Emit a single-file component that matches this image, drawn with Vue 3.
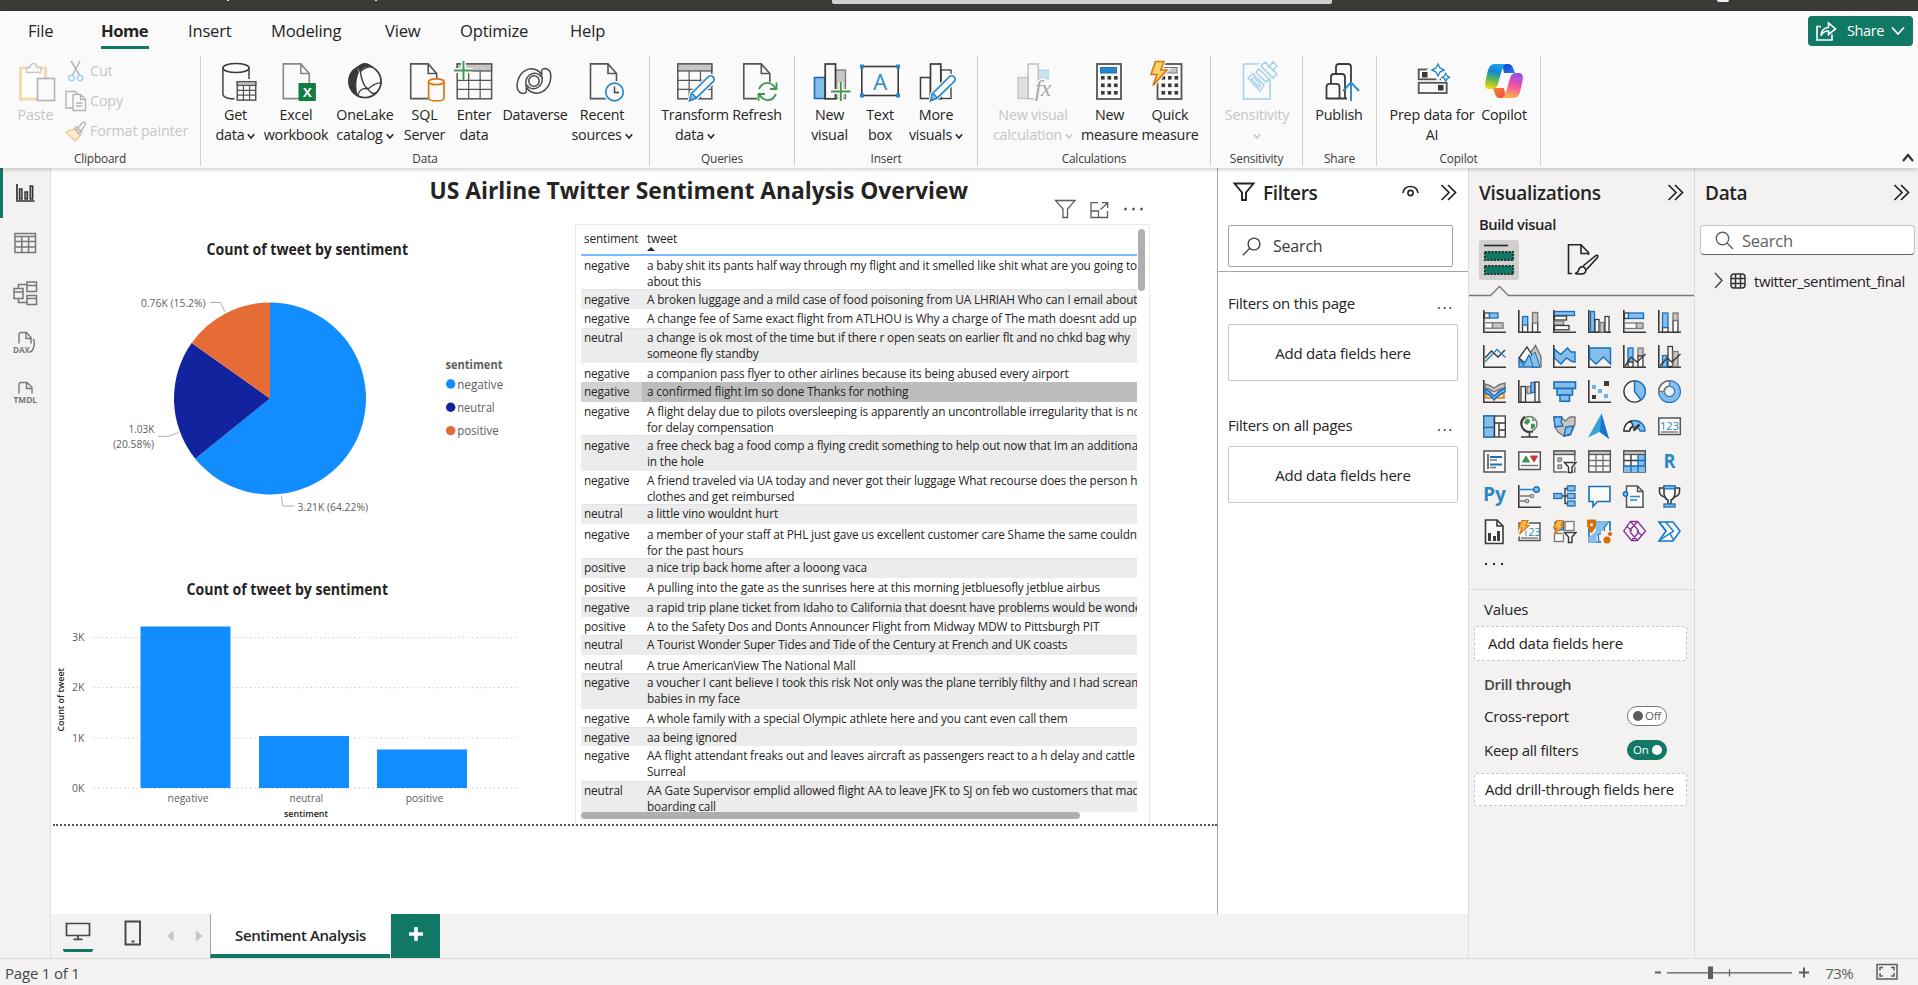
<script setup>
const D = '#3b3a39', G = '#797775', GF = '#c8c6c4', B = '#83beec', BS = '#1b6fb8', W = '#fafafa', GR = '#3d9a50', OR = '#e07b1a'

const r = (x, y, w, h, f = 'none', s = D, k = 1.3) =>
  `<rect x="${x}" y="${y}" width="${w}" height="${h}" fill="${f}" stroke="${s}" stroke-width="${k}"/>`
const p = (d, s = D, f = 'none', k = 1.4) => `<path d="${d}" fill="${f}" stroke="${s}" stroke-width="${k}"/>`
const c = (x, y, q, f = 'none', s = D, k = 1.4) =>
  `<circle cx="${x}" cy="${y}" r="${q}" fill="${f}" stroke="${s}" stroke-width="${k}"/>`

/* ribbon artwork, 40 x 44 */
const page = (x, s = '#555', f = W) => p(`M${x} 3.9H${x + 17.5}L${x + 26} 13.5V38.6H${x}ZM${x + 17.5} 3.9V13.5H${x + 26}`, s, f, 1.6)
const grid = (x, y, w, h, s = '#555', hd = GF) =>
  r(x, y, w, h, W, s, 1.5) + r(x, y, w, h * 0.2, hd, s, 1.3) +
  p(`M${x + w / 3} ${y + h * 0.2}V${y + h}M${x + w * 2 / 3} ${y + h * 0.2}V${y + h}M${x} ${y + h * 0.47}H${x + w}M${x} ${y + h * 0.73}H${x + w}`, s, 'none', 1.2)
const pencil = p('M14.6 40.6L16.4 33.6L33.4 16.6Q35.6 14.8 38 16.6Q40.2 19 38.4 21.4L21 38.2Z', W, W, 4) +
  p('M14.6 40.6L16.4 33.6L33.4 16.6Q35.6 14.8 38 16.6Q40.2 19 38.4 21.4L21 38.2Z', '#2b88c8', W, 1.6) +
  p('M14.6 40.6L16.4 33.6Q19.6 34.4 21 38.2Z', '#2b88c8', B, 1.4)
const calc = (x, top) => r(x, 4, 24, 35, W, '#555', 1.8) + top +
  [14.5, 22, 29.5].map(y => [4, 10.5, 17].map(q => `<rect x="${x + q}" y="${y + 1.5}" width="3.6" height="3.6" fill="${D}"/>`).join('')).join('')

const art = {
  paste: r(1.5, 8, 25, 31, '#fff', '#f7d9ae', 3) + p('M7.5 12.5V7.5H11Q11.5 3.5 14.5 3.5Q17.5 3.5 18 7.5H22V12.5Z', '#c8c8c8', W) + r(18.5, 18.5, 17, 22, W, '#b4b4b4', 1.7),
  get: p('M6.9 8V34.5Q8 38.8 20 39Q33 38.8 33 34.5V8', D, W) + `<ellipse cx="20" cy="8" rx="13.1" ry="4.6" fill="${W}" stroke="${D}" stroke-width="1.5"/>` + r(19.5, 20, 21, 22, W, W, 2) + grid(21.3, 21.7, 18.4, 18.4),
  excel: page(7.3, '#888') + `<rect x="22.5" y="23" width="17.4" height="18" rx="1" fill="#107c41"/><text x="31.2" y="36.8" font-size="13" font-weight="700" fill="#fff" text-anchor="middle">X</text>`,
  onelake: `<circle cx="20" cy="21.5" r="16" fill="${W}" stroke="${D}" stroke-width="1.7"/><path d="M12 7Q20-1 28 7Q20 5 15 12Z M12 7Q2 12 3.5 24Q5 33 13 36Q9 24 14 12Z" fill="${D}"/>` +
    p('M15 9Q17 26 23 29Q31 22 37 23M13 35Q15 27 23 29Q27 36 32 32M28 7Q21 6 15 12'),
  sql: page(5.7) + p('M23.6 22V38Q24 41 31.3 41Q38.8 41 39 38V22', '#d9760f', W, 1.7) + `<ellipse cx="31.3" cy="21.8" rx="7.7" ry="2.9" fill="${W}" stroke="#d9760f" stroke-width="1.7"/>`,
  enter: grid(3.2, 4, 34.4, 34.8) + p('M0 10.5H19M9.5 1V20', W, 'none', 5) + p('M0 10.5H19M9.5 1V20', GR, 'none', 1.9),
  dataverse: c(19, 21, 5.2, 'none', '#4a4a4a', 1.5) +
    p('M27 14.500C25.500 10.500 27 8.500 30 8.500C36 9 37 16 35 22C32 31 24 35.500 16.500 32C9.500 28.500 9 19.500 14.500 15C19 12 24 13 26 17', '#4a4a4a', 'none', 1.5) +
    p('M11 27.500C12.500 31.500 11 33.500 8 33.500C2 33 1 26 3 20C6 11 14 6.500 21.500 10C28.500 13.500 29 22.500 23.500 27C19 30 14 29 12 25', '#4a4a4a', 'none', 1.5),
  recent: page(8.5) + c(32.5, 32, 10.4, W, W) + c(32.5, 32, 8.8, W, '#2b88c8', 1.7) + p('M32.500 26.500V32.500H37', D),
  transform: grid(2.8, 4, 34, 34.800) + pencil,
  refresh: page(6.800) + `<rect x="20" y="22" width="21" height="20" fill="${W}"/>` + p('M22 29Q25 22.500 31 22.800Q36 23.500 38.500 28.500M39.500 22.500V29H33M39 34Q36 40.500 30 40.200Q25 39.500 22.500 34.500M21.500 41V34H28', GR, 'none', 1.8),
  newvis: r(25.500, 10, 10, 28.500, GF, G) + r(4.500, 17.500, 10.500, 21, B, BS, 1.600) + r(15.200, 4, 10.300, 34.800, W, D, 1.700) + p('M21 31.500H40.500M30.800 22V41', W, 'none', 5) + p('M21 31.500H40.500M30.800 22V41', GR, 'none', 1.900),
  text: r(1.800, 6.500, 36.400, 29, W, D, 1.600) + [[0, 4.500], [36, 4.500], [0, 33.500], [36, 33.500]].map(q => `<rect x="${q[0]}" y="${q[1]}" width="4" height="4" fill="#2b88c8"/>`).join('') + `<text x="20" y="29.500" font-size="22" fill="#2b88c8" text-anchor="middle">A</text>`,
  more: r(25, 10, 10, 28.500, W) + r(4.500, 17.500, 10, 21, W, D, 1.500) + r(14.500, 4, 10.300, 34.800, W, D, 1.700) + pencil,
  calcvis: r(25.500, 10, 10, 9, '#c7e0f4', '#bcd9ee') + r(5, 17.500, 10, 21, '#e1dfdd', '#c4c4c4') + r(15.200, 4, 10, 34.800, W, '#c4c4c4', 1.600) + `<text x="30" y="36" font-size="23" font-style="italic" font-family="Liberation Serif" fill="#a6a6a6" stroke="${W}" stroke-width="3" paint-order="stroke" text-anchor="middle">fx</text>`,
  calc: calc(7, r(10.500, 7.500, 16, 5.500, '#2b88c8', BS, 1)),
  quick: calc(7.500, r(12, 7.500, 15, 5.500, GF, G, 1)) + p('M5.500 1.500H14L10.800 10H17L3 25.500L7 14.500H1Z', W, W, 4) + p('M5.500 1.500H14L10.800 10H17L3 25.500L7 14.500H1Z', '#d9760f', '#fcd06b', 1.600),
  sens: r(6.500, 4, 26.500, 35, W, '#a9d3ea', 1.600) + p('M20 8L29 18L38 12L31 2Z', W, W, 5) + p('M24 6L28 2L40 14L36 18ZM31 8L36 2L40 6L35 11M22 9L32 19L29 22L19 12Z', '#a9d3ea', W, 1.600) + p('M11 18L16 13.500L27 25L23 31Z M14.500 19L17 17L23.500 24.500L22 27Z', '#a9d3ea', 'none', 1.500),
  publish: p('M17 14V7Q17 4 20 4H29Q32 4 32 7V22M12 23V17Q12 14 15 14H23Q26 14 26 17V38', D, 'none', 1.800) + p('M7.500 38.500V27Q7.500 23.800 10.500 23.800H17.500Q20.500 23.800 20.500 27V38.500ZM20 38.500H28', D, W, 1.800) + p('M32 41V22.500M24 31L32 22.300L40 31', '#2b88c8', 'none', 1.900),
  prep: r(6.700, 9.500, 28, 9.800, W, '#555', 1.800) + r(6.700, 22.800, 28, 10.200, W, '#555', 1.800) + `<rect x="10" y="12" width="5.500" height="5.500" fill="${D}"/><rect x="26" y="25" width="5.500" height="5.500" fill="${D}"/>` + p('M26 1L28.500 7L35 10L28.500 13L26 18L23 13L18 10L23 7Z', W, W, 4) + `<rect x="29" y="10" width="10" height="12" fill="${W}"/>` + p('M26 4L28 8L32 10L28 12L26 16L24 12L20 10L24 8ZM33.800 13.500L35.200 16L37.500 17.300L35.200 18.600L33.800 21L32.400 18.600L30 17.300L32.400 16Z', '#2b88c8', W, 1.400),
  copilot: `<defs><linearGradient id="ca" x1=".5" y1="0" x2=".3" y2="1"><stop offset="0" stop-color="#1aa2e6"/><stop offset=".3" stop-color="#1684dc"/><stop offset=".62" stop-color="#58b957"/><stop offset="1" stop-color="#ffd400"/></linearGradient><linearGradient id="cb" x1=".6" y1="0" x2=".4" y2="1"><stop offset="0" stop-color="#8b53f0"/><stop offset=".45" stop-color="#ee4fa5"/><stop offset="1" stop-color="#ffb14e"/></linearGradient><linearGradient id="cc" x1="0" y1="0" x2="1" y2="1"><stop offset="0" stop-color="#0a3fc4"/><stop offset="1" stop-color="#2a7bea"/></linearGradient><linearGradient id="cd" x1="0" y1="0" x2="1" y2="1"><stop offset="0" stop-color="#f58a2c"/><stop offset="1" stop-color="#e8484f"/></linearGradient></defs>
<path d="M18 4H25Q28 4.500 29 8L31 13H20Z" fill="url(#cc)"/><path d="M22 38H15Q12 37.500 11 34L9 28H20Z" fill="url(#cd)"/><path d="M10 4H22Q19 6 17 13L14 24Q12.500 29 8 29H4Q0 28 1.500 21L4 10Q6 4 10 4Z" fill="url(#ca)"/><path d="M30 38H18Q21 36 23 29L26 18Q27.500 13 32 13H36Q40 14 38.500 21L36 32Q34 38 30 38Z" fill="url(#cb)"/>`
}

const groups = [
  { name: 'Data', w: 449, pad: 4, items: [
    { i: 'get', w: 61, a: 'Get', b: 'data', v: 1 }, { i: 'excel', w: 60, a: 'Excel', b: 'workbook' },
    { i: 'onelake', w: 78, a: 'OneLake', b: 'catalog', v: 1 }, { i: 'sql', w: 41, a: 'SQL', b: 'Server' },
    { i: 'enter', w: 58, a: 'Enter', b: 'data' }, { i: 'dataverse', w: 64, a: 'Dataverse', b: '' },
    { i: 'recent', w: 70, a: 'Recent', b: 'sources', v: 1 }] },
  { name: 'Queries', w: 145, pad: 12, items: [
    { i: 'transform', w: 66, a: 'Transform', b: 'data', v: 1 }, { i: 'refresh', w: 58, a: 'Refresh', b: '' }] },
  { name: 'Insert', w: 183, pad: 6, items: [
    { i: 'newvis', w: 57, a: 'New', b: 'visual' }, { i: 'text', w: 44, a: 'Text', b: 'box' },
    { i: 'more', w: 68, a: 'More', b: 'visuals', v: 1 }] },
  { name: 'Calculations', w: 233, pad: 8, items: [
    { i: 'calcvis', w: 94, a: 'New visual', b: 'calculation', v: 1, off: 1 }, { i: 'calc', w: 59, a: 'New', b: 'measure' },
    { i: 'quick', w: 62, a: 'Quick', b: 'measure' }] },
  { name: 'Sensitivity', w: 92, pad: 8, items: [{ i: 'sens', w: 76, a: 'Sensitivity', b: '', v: 1, off: 1 }] },
  { name: 'Share', w: 74, pad: 3, items: [{ i: 'publish', w: 66, a: 'Publish', b: '' }] },
  { name: 'Copilot', w: 164, pad: 10, items: [
    { i: 'prep', w: 90, a: 'Prep data for', b: 'AI' }, { i: 'copilot', w: 54, a: 'Copilot', b: '' }] }
]

/* visual gallery, 23 x 23 */
const ax = p('M.8 0V22.2H23', D, 'none', 1.6)
const bolt = p('M4 .5H10L8 5.500H11L1.500 14L4 8H.5Z', '#d9760f', '#fcb94b', 1.200)
const funnelS = p('M11 12.500H23.500L19 17.500V23L15.500 21.500V17.500Z', W, W, 3) + p('M11.500 12.500H23L19 17V22.500H15.500V17Z', D, W, 1.500)
const viz = [
  ax + r(1.5, 3, 5, 5, W, D) + r(6.500, 3, 8.500, 5, B, BS) + r(1.500, 12.800, 8, 5.400, W, G) + r(9.500, 12.800, 10.500, 5.400, GF, G),
  ax + r(4.500, 14.500, 5.200, 7.500, W, D) + r(4.500, 6.500, 5.200, 8.500, B, BS) + r(14.500, 12.500, 5.200, 9.500, W, D) + r(14.500, 2.500, 5.200, 10.500, GF, G),
  ax + r(1.500, 1.500, 20, 4, B, BS) + r(1.500, 6, 12, 4, W, D) + r(1.500, 11, 9, 4, GF, G) + r(1.500, 15.500, 14.500, 4.300, W, D),
  ax + r(2.500, 1.500, 4, 20, B, BS) + r(7, 9.500, 4, 12.500, W, D) + r(12, 12.500, 4, 9.500, GF, G) + r(17, 6.500, 4, 15.500, W, D),
  ax + r(1.500, 3, 4, 5.500, W, D) + r(5.500, 3, 15, 5.500, B, BS) + r(1.500, 13, 12, 5.500, W, G) + r(13.500, 13, 6.500, 5.500, GF, G),
  ax + r(4.500, 17.500, 5.500, 4.500, W, D) + r(4.500, 3, 5.500, 14.500, B, BS) + r(15, 10.500, 5, 11.500, W, D) + r(15, 3, 5, 7.500, GF, G),

  ax + p('M2 13L8.500 6L15 12L22 5') + p('M2 17L14 4.500L22.500 12.500', '#2b88c8'),
  p('M9 13L17.500 .500L23 12V22H14Z', G, GF) + p('M1 13L9 2L14 10L9.500 20Z', D, W) + p('M1 14L5.500 20L11 10L20 22H1Z', BS, B) + p('M12 12L17 7L22 22H15Z', BS, B, 1),
  ax + p('M1.500 4L7.500 9.500L14.500 3L18 7H22V17L19 16.500L13.500 13L8 19L1.500 13Z', BS, B),
  ax + p('M1.500 3H22.500V19L15.500 12L8 19L1.500 13Z', BS, B),
  ax + r(5, 3, 5, 14, B, BS) + r(5, 17, 5, 5, W, D) + r(15, 3, 5, 8, GF, G) + r(15, 11, 5, 11, W, D) + p('M2 21L8 12L14 17L22.500 9'),
  ax + r(4.500, 10.500, 4.500, 11.500, B, BS) + r(10, 1.500, 4.500, 20, W, D) + r(15, 6.500, 5, 15, GF, G) + p('M2 21L9 13L14 17L22.500 9'),

  p('M3 14H9V18H3ZM14 14H21V18H14Z', OR, '#fcd9a8', 1.600) + ax + p('M2 4Q7 5 11 8Q16 4 22 3V8Q16 9 11 12Q7 9 2 8Z', G, GF) + p('M2 9Q7 11 11 16Q16 11 22 8V12Q16 14 11 20Q7 14 2 13Z', BS, B),
  ax + r(3, 6.500, 4.500, 15.500, W, D) + r(9, 6.500, 4, 7, GF, G) + r(13, 2.500, 3.500, 10, B, BS) + r(17, 2, 4, 20, W, D),
  r(1, 2, 21.500, 6.500, B, BS, 1.600) + r(4, 8.500, 15.500, 6.500, B, BS, 1.600) + r(7, 15, 9.500, 6.300, B, BS, 1.600),
  ax + `<path d="M16 1h5v5h-5zM4 15h4v4H4z" fill="${D}"/><path d="M4 5h4v4H4zM10 9h4v4h-4zM16 14h4v4h-4z" fill="#6fb1e4"/>`,
  c(11.500, 11.500, 10.600, W, D) + p('M11.500 .9A10.600 10.600 0 0 1 18 20L11.500 11.500Z', BS, B),
  c(11.500, 11.500, 8, 'none', BS, 7) + c(11.500, 11.500, 8, 'none', B, 5) + p('M.9 11.500A10.600 10.600 0 0 1 11.500 .9V6A5.500 5.500 0 0 0 6 11.500Z', G, W),

  r(.8, 1, 21.500, 21, W, D) + r(.8, 1, 10.500, 11.500, B, BS) + r(.8, 12.500, 10.500, 9.500, B, BS) + p('M11.500 8H22M11.500 1V22M16 8V22M16 15H22', D),
  c(11.500, 9, 7.500, W, G) + `<path d="M8 4Q12 3 12 7L9 10L6 8ZM13 9Q18 7 17 12Q15 15 13 14ZM14 3L17 6L14 6Z" fill="${GR}"/>` + p('M7 1.500Q1 6 4 12.500Q8 19 15 16.500M11.500 18V21.500M3 22H20', D, 'none', 1.700),
  p('M1 2H8L12 6L17 2H22V9L20 14L17 20L11 21L5 17L2 12Z', G, GF) + p('M1 2H9L8 7L10 11L2 12Z', BS, B) + p('M13 12L20 11L18 19L11 21L12 16Z', BS, B),
  `<path d="M13.500-1.500L21 24L11.500 17L0 22.500Z" fill="#39a0d8"/><path d="M13.500-1.500L21 24L12 17Z" fill="#1b74cf"/>`,
  p('M1 16A10.500 10.500 0 0 1 22 16H17A5.500 5.500 0 0 0 6.500 16Z', BS, B) + p('M1 16A10.500 10.500 0 0 1 8 6L10 11A6 6 0 0 0 6.500 16Z', D, W) + p('M10.500 15.500L16.500 9.500', D, 'none', 2.500),
  r(.8, 3, 21.500, 16.500, W, '#555', 1.500) + `<text x="11.500" y="14.800" font-size="11" fill="#2b88c8" text-anchor="middle">123</text>` + p('M3 17H20', G),

  r(1, 1, 21, 21, W, D) + p('M5 4V19', D) + p('M7 7H19M7 14.500H19', BS, 'none', 2) + p('M7 10H14M7 17.500H13', G),
  r(.8, 2, 21.500, 17.500, W, '#555', 1.500) + p('M4.500 12L8 6L11.500 12Z', GR, GR, 1) + p('M12.500 6H19.500L16 12Z', '#d13438', '#d13438', 1) + p('M3 15.500H20', G),
  r(.8, 1, 21, 21, W, '#555') + r(.8, 1, 21, 3.500, GF, '#555') + r(5, 8, 3.500, 3.500, GF, G) + r(5, 15, 3.500, 3.500, GF, G) + funnelS,
  r(.8, 1, 21.500, 21, W, '#555', 1.500) + r(.8, 1, 21.500, 3.500, GF, '#555') + p('M8 4.500V22M15 4.500V22M1 10.500H22M1 16H22', G),
  r(.8, 1, 21.500, 21, W, '#555', 1.500) + `<path d="M15 4h7v18H1v-6h14z" fill="${B}"/>` + r(.8, 1, 21.500, 3.500, GF, '#555') + p('M1 10.500H15M8 5V16') + p('M1 16H22V5M15 5V22M8 16V22M15 10.500H22', BS),
  `<text x="11.500" y="18.300" font-size="20" font-weight="700" fill="#2b88c8" text-anchor="middle" textLength="12" lengthAdjust="spacingAndGlyphs">R</text>`,

  `<text x="11.500" y="15.800" font-size="20" font-weight="700" fill="#2b88c8" text-anchor="middle" textLength="23" lengthAdjust="spacingAndGlyphs">Py</text>`,
  ax + p('M1 4.500H17', '#2b88c8', 'none', 1.600) + p('M1 11H13M1 16H8', G) + c(18.500, 4.500, 2.800, B, BS) + c(14, 11, 1.600, W, G) + c(9, 16, 1.600, W, G),
  p('M9 11H14M17 3.500H12V18.500H17M12 11H17', D) + r(.8, 8.500, 8, 5, B, BS) + r(14.500, .8, 7.500, 5, B, BS) + r(14.500, 8.500, 7.500, 5, B, BS) + r(14.500, 16, 7.500, 5, B, BS),
  p('M1 1.500H22V16.500H9.500L5 21.500V16.500H1Z', BS, W, 1.600),
  p('M3.500 1H14.500L20 6.500V22.200H3.500ZM14.500 1V6.500H20', '#555', W, 1.500) + c(2.500, 9, 2.200, B, BS) + p('M7 11.500H17M7 15H14', '#2b88c8'),
  p('M6 3H1.500V7Q2 11 7 12M17 3H21.500V7Q21 11 16 12', D, W, 1.600) + p('M6 1.500H17V9Q16 14 13 15V19H10V15Q7 14 6 9Z', D, W, 1.600) + r(6, .8, 11, 3, B, BS) + r(6, 19, 11, 3, B, BS),

  p('M2.500 0H14L20 6V23.500H2.500ZM14 0V6H20', D, W, 1.600) + `<path d="M5 13h3v8H5zM10 16h3v5h-3zM14 11h3v10h-3z" fill="${D}"/>`,
  r(1, 3, 21, 17.500, W, '#555', 1.500) + `<text x="13.500" y="15.500" font-size="10.500" fill="#2b88c8" text-anchor="middle">123</text>` + p('M3 18H20', G) + p('M4 .5H10L8 5.500H11L1.500 14Z', W, W, 3) + bolt,
  r(12, 1.500, 9, 9, W, G) + r(1.500, 13.500, 9, 8, W, G) + r(2, 2, 8.500, 8, B, BS) + bolt + funnelS,
  p('M1 2H22V22H1Z', BS, W, 1.600) + p('M9 2H19L15 9L12 13L8 15V22H1V18L8 12Z', B, B) + p('M20 3L16 8L17 12L10 15L11 21', BS, 'none', 1.200) + `<rect x="13" y="11" width="11" height="12" fill="#f3f2f1"/>` + p('M3.500 13L-.3 6.500V0H7.500V6.500Z', '#d96c00', '#d96c00', 1) + c(3.600, 4.800, 1.300, W, W, .5) + c(19, 20, 2.800, '#d96c00', '#d96c00') + c(22, 14, 1.400, '#d96c00', '#d96c00'),
  p('M7.500 1.500H14.500L22.500 11L14.500 20.500H8.500L.8 11Z', '#8b2a9b', W, 1.300) + p('M7.500 1.500L15 10Q16 11.500 15 13L8.500 20.500M14.500 1.500L7.500 9.500Q6.500 11 7.500 12.500L14.500 20.500M4 6.500L9 11M19 16L14 11', '#8b2a9b', 'none', 1.300),
  p('M1 2H15L22 11L15 21H1L8 11Z', '#0f7ad1', W, 1.600) + p('M7.500 2L15.500 11L2 20M12 13.500L15.500 20M1 2L8 11', '#0f7ad1', 'none', 1.400)
]

/* report data */
const TAU = Math.PI * 2
const slice = (from, to) => {
  const q = t => `${(96 * Math.sin(t * TAU)).toFixed(2)} ${(-96 * Math.cos(t * TAU)).toFixed(2)}`
  return `M0 0L${q(from)}A96 96 0 ${to - from > 0.5 ? 1 : 0} 1 ${q(to)}Z`
}
const pie = [
  { d: slice(0, 0.6422), fill: '#118dff' },
  { d: slice(0.6422, 0.848), fill: '#12239e' },
  { d: slice(0.848, 1), fill: '#e66c37' }
]
const legend = [['negative', '#118dff', 46], ['neutral', '#12239e', 37.500], ['positive', '#e66c37', 41.500]]
const bars = [
  { x: 140.500, y: 626.500, n: 'negative', cx: 188, w: 41 },
  { x: 259, y: 736, n: 'neutral', cx: 306.300, w: 33.500 },
  { x: 377, y: 749.500, n: 'positive', cx: 424.500, w: 37.500 }
]
const ticks = [['3K', 637.500], ['2K', 687.700], ['1K', 738], ['0K', 788.300]]

const rows = [
  ['negative', 33, 'a baby shit its pants half way through my flight and it smelled like shit what are you going to do', 'about this'],
  ['negative', 20, 'A broken luggage and a mild case of food poisoning from UA LHRIAH Who can I email about'],
  ['negative', 19, 'A change fee of Same exact flight from ATLHOU is Why a charge of The math doesnt add up'],
  ['neutral', 35, 'a change is ok most of the time but if there r open seats on earlier flt and no chkd bag why', 'someone fly standby'],
  ['negative', 19, 'a companion pass flyer to other airlines because its being abused every airport'],
  ['negative', 20, 'a confirmed flight Im so done Thanks for nothing'],
  ['negative', 33, 'A flight delay due to pilots oversleeping is apparently an uncontrollable irregularity that is not', 'for delay compensation'],
  ['negative', 36, 'a free check bag a food comp a flying credit something to help out now that Im an additional', 'in the hole'],
  ['negative', 33, 'A friend traveled via UA today and never got their luggage What recourse does the person have', 'clothes and get reimbursed'],
  ['neutral', 20, 'a little vino wouldnt hurt'],
  ['negative', 34, 'a member of your staff at PHL just gave us excellent customer care Shame the same couldnt', 'for the past hours'],
  ['positive', 20, 'a nice trip back home after a looong vaca'],
  ['positive', 19, 'A pulling into the gate as the sunrises here at this morning jetbluesofly jetblue airbus'],
  ['negative', 20, 'a rapid trip plane ticket from Idaho to California that doesnt have problems would be wonderful'],
  ['positive', 18, 'A to the Safety Dos and Donts Announcer Flight from Midway MDW to Pittsburgh PIT'],
  ['neutral', 20, 'A Tourist Wonder Super Tides and Tide of the Century at French and UK coasts'],
  ['neutral', 18, 'A true AmericanView The National Mall'],
  ['negative', 36, 'a voucher I cant believe I took this risk Not only was the plane terribly filthy and I had screaming', 'babies in my face'],
  ['negative', 18, 'A whole family with a special Olympic athlete here and you cant even call them'],
  ['negative', 19, 'aa being ignored'],
  ['negative', 35, 'AA flight attendant freaks out and leaves aircraft as passengers react to a h delay and cattle', 'Surreal'],
  ['neutral', 35, 'AA Gate Supervisor emplid allowed flight AA to leave JFK to SJ on feb wo customers that made', 'boarding call']
]
</script>

<template>
  <div class="app">
    <header class="titlebar"><i class="descender d1"></i><i class="descender d2"></i><i class="searchbar"></i><i class="avatar"></i></header>

    <section class="ribbon">
      <nav class="tabs">
        <span class="t1">File</span><span class="t2 on">Home</span><span class="t3">Insert</span><span class="t4">Modeling</span><span class="t5">View</span><span class="t6">Optimize</span><span class="t7">Help</span>
        <button class="share">
          <svg width="22" height="22" viewBox="0 0 22 22" fill="none" stroke="#fff" stroke-width="1.6"><path d="M6 6.500H2V20H17V14.500" /><path d="M6 15.500Q6.500 8 13.500 7.500V3L20.500 9L13.500 14.500V11Q9 10.500 6 15.500Z" /></svg>
          <b>Share</b>
          <svg width="14" height="10" viewBox="0 0 14 10" fill="none" stroke="#fff" stroke-width="1.7"><path d="M1 1.500L7 8L13 1.500" /></svg>
        </button>
      </nav>
      <div class="groups">
        <div class="group clip">
          <div class="cliprow">
            <div class="paste"><svg width="38" height="44" v-html="art.paste"></svg><span>Paste</span></div>
            <div class="small">
              <div>
                <svg width="22" height="22" viewBox="0 0 22 22" fill="none"><path d="M6 1L14.500 15M15 1L7.500 15" stroke="#b4b4b4" stroke-width="1.500" /><circle cx="6.500" cy="18" r="2.800" stroke="#a9d3ea" stroke-width="1.500" /><circle cx="15" cy="18" r="2.800" stroke="#a9d3ea" stroke-width="1.500" /></svg>Cut
              </div>
              <div>
                <svg width="22" height="22" viewBox="0 0 22 22" fill="#fafafa" stroke="#b4b4b4" stroke-width="1.400"><path d="M8 18H1V1.500H10L13 4.500" /><path d="M8 4.500H15.500L20.500 9.500V20.500H8ZM15.500 4.500V9.500H20.500M11 13H17.500M11 16H17.500" /></svg>Copy
              </div>
              <div>
                <svg width="22" height="22" viewBox="0 0 22 22" stroke-width="1.400"><path d="M1 12L9.500 9L15 15.500L10 21Z" fill="#fdebd3" stroke="#f2cb95" /><path d="M9 7.500L16 15M12 9L17 3Q20 1 20.500 3.500Q20.500 5 15 12M10.500 6L17.500 13" fill="none" stroke="#b4b4b4" /></svg>Format painter
              </div>
            </div>
          </div>
          <div class="gname">Clipboard</div>
        </div>
        <div v-for="g in groups" :key="g.name" class="group" :style="{ width: g.w + 'px' }">
          <div class="items" :style="{ paddingLeft: g.pad + 'px' }">
            <div v-for="it in g.items" :key="it.i" class="cmd" :class="{ off: it.off }" :style="{ width: it.w + 'px' }">
              <svg width="40" height="44" v-html="art[it.i]"></svg>
              <span>{{ it.a }}</span>
              <span class="l2">{{ it.b }}<svg v-if="it.v" class="chev" :class="{ lone: !it.b }" width="8" height="7" viewBox="0 0 8 7"><path d="M.8 1.300L4 5L7.200 1.300" fill="none" stroke="currentColor" stroke-width="1.600" /></svg></span>
            </div>
          </div>
          <div class="gname">{{ g.name }}</div>
        </div>
        <svg class="collapse" width="12" height="9" viewBox="0 0 12 9"><path d="M1 8L6 2L11 8" fill="none" stroke="#333" stroke-width="2.200" /></svg>
      </div>
    </section>

    <main class="main">
      <aside class="side">
        <div class="sel"><svg width="24" height="24" viewBox="0 0 24 24" fill="none" stroke="#333" stroke-width="1.700"><path d="M4 3V20H21.500" /><path d="M6.500 8H9V18H6.500ZM12 11H14.500V18H12ZM17.200 5H19.700V18H17.200Z" fill="#aaa" stroke-width="1.400" /></svg></div>
        <div><svg width="24" height="24" viewBox="0 0 24 24" fill="none" stroke="#797775" stroke-width="1.500"><path d="M2 2.500H22.500V21.500H2ZM2 5.500H22.500M2 10.500H22.500M2 16H22.500M8.800 5.500V21.500M15.600 5.500V21.500" /></svg></div>
        <div><svg width="26" height="26" viewBox="0 0 26 26" fill="none" stroke="#797775" stroke-width="1.500"><path d="M2 8.500H11V18.500H2ZM2 12H11M15 2H24.500V11.500H15ZM15 5.500H24.500M15 15.500H24.500V24.500H15ZM15 18.500H24.500M6.500 8.500V4.500H15M6.500 18.500V22.500H15" /></svg></div>
        <div><svg width="26" height="26" viewBox="0 0 26 26" fill="none" stroke="#797775" stroke-width="1.400"><path d="M7 13.500V5Q7 2.500 9 2.500H14.500L19 7.500V13.500M14 3V8.500H19M21 9Q23 11 22 16Q21 21 18 22" /><text x="1" y="22.500" font-size="9.500" font-weight="700" fill="#797775" stroke="none" textLength="17" lengthAdjust="spacingAndGlyphs">DAX</text></svg></div>
        <div><svg width="26" height="26" viewBox="0 0 26 26" fill="none" stroke="#797775" stroke-width="1.400"><path d="M7 13.500V5Q7 2.500 9 2.500H15L20 7.500V13.500M14.500 3V8.500H20" /><text x="1.500" y="22.500" font-size="9.500" font-weight="700" fill="#797775" stroke="none" textLength="23.500" lengthAdjust="spacingAndGlyphs">TMDL</text></svg></div>
      </aside>

      <div class="center">
        <div class="upper">
          <div class="canvas">
            <svg class="charts" width="1166" height="746" viewBox="51 168 1166 746">
              <text class="h" x="429.500" y="199" font-size="23.500" textLength="538.500" lengthAdjust="spacingAndGlyphs">US Airline Twitter Sentiment Analysis Overview</text>
              <text class="h" x="206.500" y="255" font-size="15.200" textLength="201.500" lengthAdjust="spacingAndGlyphs">Count of tweet by sentiment</text>
              <g transform="translate(270 398.500)"><path v-for="s in pie" :key="s.fill" :d="s.d" :fill="s.fill" /></g>
              <path d="M210 302.500H220.500L225 312M158 436.300H168.500L178.500 432.500M281.500 496L282.500 506H294" fill="none" stroke="#b0b0b0" />
              <g class="lab" font-size="11">
                <text x="141" y="307" textLength="64.500" lengthAdjust="spacingAndGlyphs">0.76K (15.2%)</text>
                <text x="128.500" y="433" textLength="26" lengthAdjust="spacingAndGlyphs">1.03K</text>
                <text x="113" y="448" textLength="41" lengthAdjust="spacingAndGlyphs">(20.58%)</text>
                <text x="297.500" y="511" textLength="70.500" lengthAdjust="spacingAndGlyphs">3.21K (64.22%)</text>
              </g>
              <g class="lab" font-size="11.800">
                <text class="bold" x="445.500" y="369" font-size="11.500" textLength="57" lengthAdjust="spacingAndGlyphs">sentiment</text>
                <template v-for="(l, k) in legend" :key="l[0]">
                  <circle cx="450.700" :cy="384 + k * 23.300" r="4.700" :fill="l[1]" />
                  <text x="457.200" :y="389 + k * 23" :textLength="l[2]" lengthAdjust="spacingAndGlyphs">{{ l[0] }}</text>
                </template>
              </g>
              <text class="h" x="186.500" y="594.700" font-size="15.200" textLength="201.500" lengthAdjust="spacingAndGlyphs">Count of tweet by sentiment</text>
              <g v-for="t in ticks" :key="t[0]">
                <path :d="`M93.500 ${t[1]}H520`" stroke="#c8c8c8" stroke-width="1.200" stroke-dasharray="1.200 3.150" />
                <text class="lab" x="72" :y="t[1] + 3.500" font-size="10.500" textLength="12.500" lengthAdjust="spacingAndGlyphs">{{ t[0] }}</text>
              </g>
              <g v-for="b in bars" :key="b.n">
                <rect :x="b.x" :y="b.y" width="90" :height="788 - b.y" fill="#118dff" />
                <text class="lab" :x="b.cx - b.w / 2" y="801.500" font-size="10.500" :textLength="b.w" lengthAdjust="spacingAndGlyphs">{{ b.n }}</text>
              </g>
              <text class="ax" x="284" y="816.500" font-size="9" textLength="44" lengthAdjust="spacingAndGlyphs">sentiment</text>
              <text class="ax" transform="translate(63.500 731.500) rotate(-90)" font-size="9" textLength="63.500" lengthAdjust="spacingAndGlyphs">Count of tweet</text>
              <g fill="none" stroke="#605e5c" stroke-width="1.300">
                <path d="M1055.500 200.500H1075L1067.500 209V217.500H1063V209Z" />
                <path d="M1098 202.700H1091V217.500H1107.500V211M1091 211H1098.500V217.500M1100.500 209.500L1107.500 203M1102 202.700H1107.700V208" />
              </g>
              <g fill="#605e5c"><circle cx="1125.500" cy="209" r="1.500" /><circle cx="1133.500" cy="209" r="1.500" /><circle cx="1141.500" cy="209" r="1.500" /></g>
            </svg>

            <div class="tablevis">
              <div class="tcontent">
                <div class="thead"><span>sentiment</span><span class="tw">tweet<i></i></span></div>
                <div v-for="(q, k) in rows" :key="k" class="trow" :class="{ alt: k % 2, picked: k === 5 }" :style="{ height: q[1] + 'px' }">
                  <span class="sen">{{ q[0] }}</span>
                  <span class="twt">{{ q[2] }}<template v-if="q[3]"><br>{{ q[3] }}</template></span>
                </div>
              </div>
              <i class="vbar"></i><i class="hbar"></i>
            </div>
            <div class="pageedge"></div>
          </div>

          <section class="filters">
            <div class="fhead">
              <svg width="22" height="20" viewBox="0 0 22 20" fill="none" stroke="#252423" stroke-width="1.900"><path d="M1.500 1.500H20.500L13 10.500V18H9V10.500Z" /></svg>
              <h2>Filters</h2>
              <svg class="eye" width="17" height="13" viewBox="0 0 17 13" fill="none" stroke="#252423" stroke-width="1.600"><path d="M1 8Q2 1.500 8.500 1.500Q15 1.500 16 8" /><circle cx="8.500" cy="8" r="2.600" /></svg>
              <svg width="17" height="17" viewBox="0 0 17 17" fill="none" stroke="#252423" stroke-width="1.700"><path d="M1.500 1L9 8.500L1.500 16M8 1L15.500 8.500L8 16" /></svg>
            </div>
            <div class="fsearch"><svg width="19" height="19" viewBox="0 0 19 19" fill="none" stroke="#484644" stroke-width="1.400"><circle cx="12" cy="7" r="5.900" /><path d="M7.800 11.200L.8 18.200" /></svg>Search</div>
            <div class="fsec"><span>Filters on this page</span><em>...</em></div>
            <div class="fbox">Add data fields here</div>
            <div class="fsec s2"><span>Filters on all pages</span><em>...</em></div>
            <div class="fbox">Add data fields here</div>
          </section>
        </div>

        <div class="pages">
          <div class="dev on"><svg width="26" height="28" viewBox="0 0 26 28" fill="none" stroke="#484644" stroke-width="1.700"><path d="M1.500 8.500H24.500V20.500H1.500ZM13 20.500V24M8.500 24.300H17.500" /></svg></div>
          <div class="dev ph"><svg width="18" height="28" viewBox="0 0 18 28" fill="none" stroke="#484644" stroke-width="1.900"><path d="M1.500 2.500H16V25.500H1.500ZM7.500 22.500H10.500" /></svg></div>
          <svg class="arrows" width="36" height="12" viewBox="0 0 36 12" fill="#c4c4ca"><path d="M6.500 .5V11.500L0 6ZM29 .5V11.500L35.500 6Z" /></svg>
          <div class="tab">Sentiment Analysis</div>
          <div class="plus"><svg width="14" height="14" viewBox="0 0 14 14"><path d="M7 0V14M0 7H14" stroke="#fff" stroke-width="3.600" /></svg></div>
        </div>
      </div>

      <section class="vispane">
        <div class="phead"><h2>Visualizations</h2><svg width="17" height="17" viewBox="0 0 17 17" fill="none" stroke="#252423" stroke-width="1.700"><path d="M1.500 1L9 8.500L1.500 16M8 1L15.500 8.500L8 16" /></svg></div>
        <h3>Build visual</h3>
        <div class="modes">
          <div class="mode on"><svg width="40" height="40" viewBox="0 0 40 40" fill="#117865" stroke="#252423"><path d="M5 5.500H29" stroke-width="1.600" /><path d="M5.700 11.700H34.300V20.300H5.700ZM5.700 25.700H34.300V34.300H5.700Z" stroke-width="1.500" stroke-dasharray="2.200 1.200" /></svg></div>
          <div class="mode two"><svg width="34" height="34" viewBox="0 0 34 34" fill="none" stroke="#252423" stroke-width="1.600"><path d="M6 30.500H2.500V1.800H15L22.500 9.500V12M15 1.800V10.500H22.500" /><path d="M9 30.500Q12 30 13 26Q15 22.500 18.500 24.500Q21.500 28 18 30.500Q14 31.500 9 30.500ZM17 23L30 12.500Q32.500 11.500 31.500 14.500L20.500 26.500" /></svg></div>
        </div>
        <svg class="notch" width="225" height="12" viewBox="0 0 225 12" fill="none" stroke="#797775" stroke-width="1.300"><path d="M0 10.500H21.500L30.500 1.500L39.500 10.500H225" /></svg>
        <div class="gallery"><svg v-for="(v, k) in viz" :key="k" width="23" height="23" viewBox="0 0 23 23" v-html="v"></svg></div>
        <div class="moredots"><i></i><i></i><i></i></div>
        <div class="wells">
          <p class="lbl">Values</p>
          <div class="well w1">Add data fields here</div>
          <p class="lbl drill">Drill through</p>
          <div class="tog"><span>Cross-report</span><b class="sw"><i></i>Off</b></div>
          <div class="tog"><span>Keep all filters</span><b class="sw yes">On<i></i></b></div>
          <div class="well w2">Add drill-through fields here</div>
        </div>
      </section>

      <section class="datapane">
        <div class="phead"><h2>Data</h2><svg width="17" height="17" viewBox="0 0 17 17" fill="none" stroke="#252423" stroke-width="1.700"><path d="M1.500 1L9 8.500L1.500 16M8 1L15.500 8.500L8 16" /></svg></div>
        <div class="dsearch"><svg width="19" height="19" viewBox="0 0 19 19" fill="none" stroke="#616161" stroke-width="1.400"><circle cx="7.500" cy="7.500" r="6.200" /><path d="M12 12L18 18" /></svg>Search</div>
        <div class="tree">
          <svg width="9" height="17" viewBox="0 0 9 17" fill="none" stroke="#484644" stroke-width="1.400"><path d="M1 1L8 8.500L1 16" /></svg>
          <svg class="tb" width="16" height="16" viewBox="0 0 16 16" fill="none" stroke="#333" stroke-width="1.500"><rect x="1" y="1" width="14" height="14" rx="3" /><path d="M1 5.500H15M1 10.500H15M5.500 1V15M10.500 1V15" /></svg>
          <span>twitter_sentiment_final</span>
        </div>
      </section>
    </main>

    <footer class="status">
      <span class="pg">Page 1 of 1</span>
      <svg width="156" height="16" viewBox="0 0 156 16" fill="none" stroke="#605e5c"><path d="M1 8.500H7M145 8.500H155M150 3.500V13.500" stroke-width="2" /><path d="M13 8.800H138M75.500 5.500V12.500" stroke-width="1.200" /><rect x="54" y="2.500" width="5" height="12.500" fill="#605e5c" stroke="none" /></svg>
      <span class="pct">73%</span>
      <svg class="fit" width="22" height="18" viewBox="0 0 22 18" fill="none" stroke="#605e5c" stroke-width="1.500"><path d="M1 1.500H21V16H1ZM7 4.500H4V7.500M15 4.500H18V7.500M7 13H4V10M15 13H18V10" /></svg>
    </footer>
  </div>
</template>

<style>
html, body { margin: 0; overflow: hidden; }
</style>

<style scoped>
.app { width: 1918px; height: 985px; display: flex; flex-direction: column; overflow: hidden; font-family: "Open Sans", "Noto Sans", sans-serif; color: #252423; background: #f3f2f1; font-size: 15px; }
.app svg { display: block; flex: none; overflow: visible; }
h2, h3, p { margin: 0; }
.titlebar { height: 11px; background: #3b3a37; position: relative; flex: none; }
.titlebar i { position: absolute; top: 0; }
.searchbar { left: 832px; width: 500px; height: 4px; background: #d2d0ce; border-radius: 0 0 2px 2px; }
.descender { width: 2px; height: 1px; background: #e0e0e0; }
.d1 { left: 227px; }
.d2 { left: 375px; }
.avatar { left: 1717px; width: 12px; height: 2px; background: #f0f0f0; border-radius: 0 0 6px 6px; }

.ribbon { height: 157px; background: #fafafa; position: relative; z-index: 3; box-shadow: 0 1px 5px rgba(0, 0, 0, .22); flex: none; display: flex; flex-direction: column; }
.tabs { height: 45px; display: flex; align-items: flex-start; font-size: 16.6px; letter-spacing: -.2px; line-height: 39px; }
.tabs > span { height: 38px; white-space: nowrap; flex: none; }
.tabs .on { font-weight: 700; background: linear-gradient(#117865, #117865) 0 100% / 100% 3px no-repeat; letter-spacing: -.5px; }
.t1 { width: 27px; margin-left: 28px; }
.t2 { width: 48px; margin-left: 46px; }
.t3 { width: 44px; margin-left: 39px; }
.t4 { width: 74px; margin-left: 39px; }
.t5 { width: 37px; margin-left: 40px; }
.t6 { width: 72px; margin-left: 38px; }
.t7 { width: 38px; margin-left: 38px; }
.share { margin: 5px 5px 0 auto; width: 105px; height: 30px; border: 0; border-radius: 4px; background: #117865; color: #fff; display: flex; align-items: center; padding: 0 0 0 7px; font: inherit; font-size: 14.5px; line-height: 20px; }
.share b { font-weight: 500; width: 37px; margin: 0 7px 0 10px; letter-spacing: -.4px; }
.groups { display: flex; height: 110px; position: relative; }
.group { box-sizing: border-box; border-right: 1px solid #d2d0ce; height: 110px; display: flex; flex-direction: column; justify-content: space-between; flex: none; }
.gname { font-size: 11.9px; letter-spacing: -.2px; text-align: center; line-height: 15px; color: #3b3a39; height: 15px; }
.items { display: flex; padding-top: 4px; }
.cmd { flex: none; display: flex; flex-direction: column; align-items: center; font-size: 14.3px; letter-spacing: -.22px; line-height: 20px; white-space: nowrap; }
.cmd > svg { margin-bottom: 1px; }
.l2 { display: flex; align-items: center; height: 20px; }
.l2 .chev { margin: 3px 0 0 3px; }
.l2 .chev.lone { margin-left: 0; }
.off, .clip { color: #c8c6c4; }
.clip { width: 201px; }
.cliprow { display: flex; padding: 4px 0 0 18px; font-size: 14.3px; letter-spacing: -.12px; }
.paste { display: flex; flex-direction: column; align-items: center; width: 35px; line-height: 20px; }
.paste svg { margin-bottom: 1px; margin-left: 4px; }
.small { margin-left: 12px; padding-top: 0; }
.small div { display: flex; align-items: center; gap: 3px; height: 30px; line-height: 30px; margin-top: -4px; margin-bottom: 4px; white-space: nowrap; }
.collapse { position: absolute; right: 4px; bottom: 4px; }

.main { height: 790px; display: flex; flex: none; }
.side { width: 50px; border-right: 1px solid #e1dfdd; flex: none; }
.side div { height: 50px; display: flex; align-items: center; justify-content: center; box-sizing: border-box; }
.side .sel { border-left: 3px solid #117865; padding-right: 3px; }
.center { width: 1417px; display: flex; flex-direction: column; flex: none; }
.upper { display: flex; height: 746px; }
.canvas { width: 1166px; background: #fff; position: relative; overflow: hidden; }
.h { font-weight: 700; fill: #252423; }
.lab { fill: #605e5c; }
.bold { font-weight: 700; }
.ax { fill: #252423; font-weight: 600; }
.tablevis { position: absolute; left: 524px; top: 56px; width: 573px; height: 600px; border: 1px solid #eaeaea; border-bottom: 0; }
.tcontent { margin: 0 0 0 5px; width: 556px; height: 587px; overflow: hidden; font-size: 11.8px; letter-spacing: -.14px; line-height: 16px; white-space: nowrap; }
.thead { display: flex; height: 31px; border-bottom: 2px solid #74bbff; padding-left: 3px; box-sizing: border-box; }
.thead > span { width: 63px; line-height: 16px; padding-top: 5px; }
.tw { position: relative; padding-left: 0; }
.tw i { position: absolute; left: 0; top: 22px; border: 4px solid transparent; border-top: 0; border-bottom: 4.500px solid #252423; }
.trow { display: flex; overflow: hidden; }
.trow span { padding-top: 1px; }
.trow:nth-child(3n) span { padding-top: 2px; }
.sen { width: 58px; padding-left: 3px; flex: none; }
.twt { padding-left: 5px; flex: 1; min-width: 0; }
.alt { background: #ececec; box-shadow: inset 0 1px #e4e4e4; }
.picked .sen { background: #d2d2d2; }
.picked .twt { background: #bdbdbd; }
.vbar, .hbar { position: absolute; background: #b0afae; border-radius: 4px; }
.vbar { left: 562px; top: 4px; width: 7px; height: 62px; }
.hbar { left: 5px; top: 587px; width: 499px; height: 7px; }
.pageedge { position: absolute; left: 2px; right: 0; top: 656px; border-top: 2px dotted #555; }

.filters { width: 251px; box-sizing: border-box; background: #fff; border-left: 1px solid #a6a6a6; padding: 0 10px; }
.fhead { display: flex; align-items: center; height: 48px; padding: 0 1px 0 5px; margin-bottom: 9px; }
h2 { font-size: 19px; font-weight: 600; letter-spacing: -.3px; line-height: 26px; padding-top: 1px; }
.fhead h2 { margin: 0 auto 0 8px; }
.fhead .eye { margin: -2px 21px 0 0; }
.fsearch { border: 1px solid #a6a6a6; border-radius: 2px; height: 40px; width: 210px; display: flex; align-items: center; gap: 12px; padding-left: 13px; font-size: 16px; letter-spacing: -.2px; color: #3b3a39; margin-bottom: 4px; }
.filters .fsec { border-top: 1px solid #a6a6a6; margin: 0 -10px; padding: 20px 14px 0 10px; height: 53px; box-sizing: border-box; display: flex; justify-content: space-between; line-height: 22px; letter-spacing: -.25px; }
.filters .fsec.s2 { border-top: 0; height: 65px; padding-top: 33px; }
.fsec em { font-style: normal; letter-spacing: 1.700px; }
.fbox { border: 1px solid #c8c6c4; border-radius: 2px; width: 228px; height: 55px; line-height: 57px; text-align: center; letter-spacing: -.25px; }

.pages { height: 44px; display: flex; align-items: flex-start; }
.dev { width: 30px; height: 38px; display: flex; justify-content: center; }
.dev svg { margin-top: 1px; }
.dev.on { margin: 0 25px 0 12px; border-radius: 2px; background: linear-gradient(#117865, #117865) 0 100% / 100% 3px no-repeat; }
.dev.ph svg { margin-top: 5px; }
.arrows { margin: 16px 7px 0 19px; }
.tab { width: 180px; height: 44px; box-sizing: border-box; background: #fff; border-left: 1px solid #a0a0a0; border-bottom: 4px solid #117865; text-align: center; font-weight: 600; line-height: 43px; font-size: 15px; letter-spacing: -.4px; }
.plus { width: 49px; height: 44px; background: #117865; display: flex; justify-content: center; padding-top: 13px; box-sizing: border-box; margin-left: 1px; }

.vispane { width: 226px; box-sizing: border-box; border-left: 1px solid #e1dfdd; flex: none; }
.phead { display: flex; justify-content: space-between; align-items: center; height: 48px; padding: 0 10px 0 10px; }
h3 { font-size: 14.8px; font-weight: 600; letter-spacing: -.4px; line-height: 20px; margin: -2px 0 6px 10px; }
.modes { display: flex; padding-left: 10px; height: 40px; }
.mode.on { background: #d2d0ce; width: 40px; border-radius: 3px; }
.mode.two { margin: 3px 0 0 47px; }
.notch { margin: 5px 0 0 0; }
.gallery { display: grid; grid-template-columns: repeat(6, 35px); grid-auto-rows: 35px; place-items: center; margin: 7px 0 0 8px; }
.moredots { display: flex; gap: 6px; padding: 14px 0 24px 16px; }
.moredots i { width: 2px; height: 2px; background: #252423; }
.wells { border-top: 1px solid #dddbd9; padding: 8px 8px 0 5px; letter-spacing: -.27px; }
.lbl { line-height: 22px; padding-left: 10px; }
.well { background: #fff; border: 1px dashed #c8c6c4; border-radius: 2px; box-sizing: border-box; width: 213px; }
.w1 { height: 35px; line-height: 33px; padding-left: 13px; }
.w2 { height: 33px; line-height: 31px; padding-left: 10px; margin-top: 1px; white-space: nowrap; }
.wells .lbl:first-child { margin-bottom: 6px; }
.wells .drill { font-weight: 600; color: #484644; margin: 12px 0 9px; letter-spacing: -.4px; }
.tog { height: 34px; display: flex; justify-content: space-between; align-items: flex-start; padding: 2px 19px 0 10px; box-sizing: border-box; line-height: 20px; }
.sw { width: 40px; height: 20px; box-sizing: border-box; border: 1px solid #797775; border-radius: 10px; background: #fff; display: flex; align-items: center; font-size: 11.500px; font-weight: 400; color: #605e5c; gap: 2px; padding-left: 5px; }
.sw i { width: 10px; height: 10px; border-radius: 50%; background: #605e5c; }
.sw.yes { background: #117865; border-color: #117865; color: #fff; gap: 4px; }
.sw.yes i { background: #fff; }

.datapane { flex: 1; border-left: 1px solid #dddbd9; }
.datapane .phead { padding: 0 8px 0 10px; }
.dsearch { box-sizing: border-box; width: 215px; height: 30px; margin: 9px 0 0 5px; background: #fff; border: 1px solid #c8c6c4; border-bottom-color: #616161; border-radius: 4px; display: flex; align-items: center; gap: 8px; padding-left: 14px; font-size: 16.500px; letter-spacing: -.25px; color: #616161; }
.tree { display: flex; align-items: center; margin: 14px 0 0 19px; height: 23px; letter-spacing: -.4px; }
.tree .tb { margin: 0 8px 0 7px; }

.status { flex: 1; border-top: 1px solid #dddbd9; display: flex; align-items: center; color: #605e5c; letter-spacing: -.2px; padding: 2px 20px 0 5px; font-size: 15px; }
.pg { margin-right: auto; color: #484644; }
.status > svg { margin-top: -2px; }
.pct { margin: 0 23px 0 15px; letter-spacing: -.6px; }
</style>
